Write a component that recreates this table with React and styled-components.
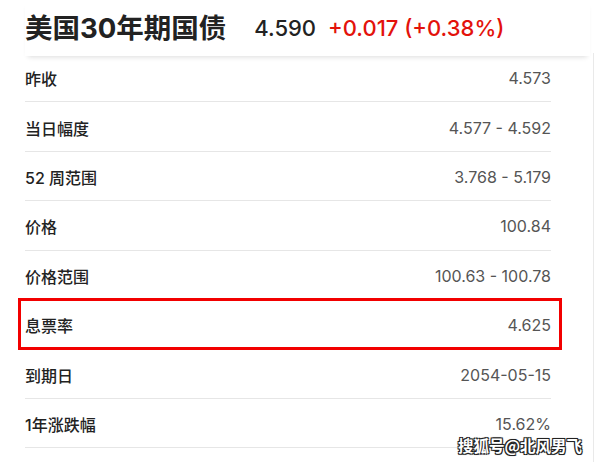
import React from "react";
import styled, { createGlobalStyle } from "styled-components";

const GlobalStyle = createGlobalStyle`
  html, body {
    margin: 0;
    padding: 0;
    background: #ffffff;
  }
  body {
    font-family: Inter, "Noto Sans CJK SC", sans-serif;
  }
`;

const Page = styled.div`
  position: relative;
  width: 597px;
  height: 462px;
  overflow: hidden;
  background: #ffffff;
`;

const Header = styled.div`
  position: relative;
  z-index: 1;
  display: flex;
  align-items: center;
  height: 56px;
  width: 565px;
  margin-left: 25px;
  background: #ffffff;
  box-shadow: 0 4px 5px -3px rgba(0, 0, 0, 0.14);
`;

const Title = styled.h1`
  margin: -4px 28px 0 0;
  font-size: 27.5px;
  font-weight: 700;
  color: #222222;
`;

const Price = styled.span`
  font-size: 22px;
  font-weight: 500;
  color: #222222;
  margin-right: 12px;
`;

const Change = styled.span`
  font-size: 22px;
  font-weight: 500;
  color: #e3120b;
`;

const List = styled.div`
  margin: -3px 0 0 25px;
  width: 568px;
  border-right: 1px solid #e9e9e9;
  height: 420px;
`;

const Row = styled.div`
  position: relative;
  box-sizing: border-box;
  display: flex;
  align-items: center;
  justify-content: space-between;
  width: 526px;
  height: 49.43px;
  border-bottom: 1px solid #e6e6e6;
  font-size: 16px;

  ${(p) =>
    p.$highlight &&
    `
    &::after {
      content: "";
      position: absolute;
      left: -7px;
      right: -11px;
      top: -2px;
      bottom: -1px;
      border: 3px solid #f20000;
      pointer-events: none;
    }
  `}
`;

const Label = styled.span`
  color: #222222;
  font-weight: 500;
  padding-top: 2px;
`;

const Value = styled.span`
  color: #555555;
  font-weight: 400;
  padding-top: 2px;
`;

const Watermark = styled.div`
  position: absolute;
  right: 15px;
  bottom: 6px;
  font-family: "Noto Sans CJK SC", sans-serif;
  font-size: 15.5px;
  font-weight: 700;
  color: #ffffff;
  text-shadow: -1px -1px 0 #222, 1px -1px 0 #222, -1px 1px 0 #222,
    1px 1px 0 #222, 0 0 2px #000;
`;

const rows = [
  ["昨收", "4.573"],
  ["当日幅度", "4.577 - 4.592"],
  ["52 周范围", "3.768 - 5.179"],
  ["价格", "100.84"],
  ["价格范围", "100.63 - 100.78"],
  ["息票率", "4.625", true],
  ["到期日", "2054-05-15"],
  ["1年涨跌幅", "15.62%"],
];

function App() {
  return (
    <>
      <GlobalStyle />
      <Page>
        <Header>
          <Title>美国30年期国债</Title>
          <Price>4.590</Price>
          <Change>+0.017 (+0.38%)</Change>
        </Header>
        <List>
          {rows.map(([label, value, hl]) => (
            <Row key={label} $highlight={hl}>
              <Label>{label}</Label>
              <Value>{value}</Value>
            </Row>
          ))}
        </List>
        <Watermark>搜狐号@北风男飞</Watermark>
      </Page>
    </>
  );
}

export default App;
